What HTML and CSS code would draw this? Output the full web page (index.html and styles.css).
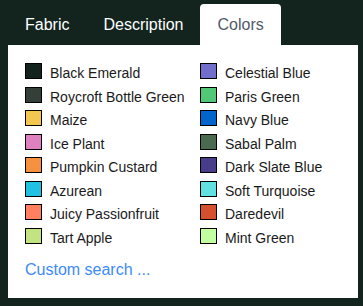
FILE: index.html
```html
<!DOCTYPE html>
<html lang="en">
<head>
  <meta charset="UTF-8" />
  <meta name="viewport" content="width=device-width, initial-scale=1.0" />
  <title>Colors</title>
  <link rel="stylesheet" href="styles.css">
</head>
<body>
  <div class="tabs">
    <div class="tab">Fabric</div>
    <div class="tab">Description</div>
    <div class="tab active">Colors</div>
  </div>

  <div class="panel">
    <div class="color-grid">
      <ul class="color-list">
        <li><span class="swatch" style="background:#12221d"></span><span class="name">Black Emerald</span></li>
        <li><span class="swatch" style="background:#343f38"></span><span class="name">Roycroft Bottle Green</span></li>
        <li><span class="swatch" style="background:#f3c74f"></span><span class="name">Maize</span></li>
        <li><span class="swatch" style="background:#df80c0"></span><span class="name">Ice Plant</span></li>
        <li><span class="swatch" style="background:#f6913f"></span><span class="name">Pumpkin Custard</span></li>
        <li><span class="swatch" style="background:#20c1e1"></span><span class="name">Azurean</span></li>
        <li><span class="swatch" style="background:#ff8060"></span><span class="name">Juicy Passionfruit</span></li>
        <li><span class="swatch" style="background:#c3e281"></span><span class="name">Tart Apple</span></li>
      </ul>
      <ul class="color-list">
        <li><span class="swatch" style="background:#716fcb"></span><span class="name">Celestial Blue</span></li>
        <li><span class="swatch" style="background:#50c878"></span><span class="name">Paris Green</span></li>
        <li><span class="swatch" style="background:#0066cc"></span><span class="name">Navy Blue</span></li>
        <li><span class="swatch" style="background:#496a4f"></span><span class="name">Sabal Palm</span></li>
        <li><span class="swatch" style="background:#483d8b"></span><span class="name">Dark Slate Blue</span></li>
        <li><span class="swatch" style="background:#61e1e1"></span><span class="name">Soft Turquoise</span></li>
        <li><span class="swatch" style="background:#d4502f"></span><span class="name">Daredevil</span></li>
        <li><span class="swatch" style="background:#c2ffa0"></span><span class="name">Mint Green</span></li>
      </ul>
    </div>
    <a class="custom-link" href="#">Custom search ...</a>
  </div>
</body>
</html>
```

FILE: styles.css
```css
* {
  margin: 0;
  padding: 0;
  box-sizing: border-box;
}

html {
  font-family: "Liberation Sans", Arial, sans-serif;
}

body {
  background-color: #13241f;
  margin: 4px 5px 8px 8px;
  color: #1a1a1a;
}

.tabs {
  display: flex;
  height: 41px;
}

.tab {
  padding: 0 17px;
  line-height: 41px;
  font-size: 16px;
  color: #fff;
  border-radius: 4px 4px 0 0;
}

.tab.active {
  background-color: #fff;
  color: #505a68;
}

.panel {
  background-color: #fff;
  height: 253px;
  padding: 18px 17px 0;
}

.color-grid {
  display: grid;
  grid-template-columns: 175px 1fr;
}

.color-list {
  list-style: none;
}

.color-list li {
  display: flex;
  align-items: flex-start;
  height: 23.57px;
  font-size: 14px;
  line-height: 16px;
  white-space: nowrap;
}

.swatch {
  flex: none;
  width: 17px;
  height: 16px;
  border: 1px solid #000;
  margin-right: 8px;
}

.name {
  margin-top: 2px;
}

.custom-link {
  display: block;
  margin-top: 9px;
  font-size: 16px;
  color: #3d8af7;
  text-decoration: none;
}
```
